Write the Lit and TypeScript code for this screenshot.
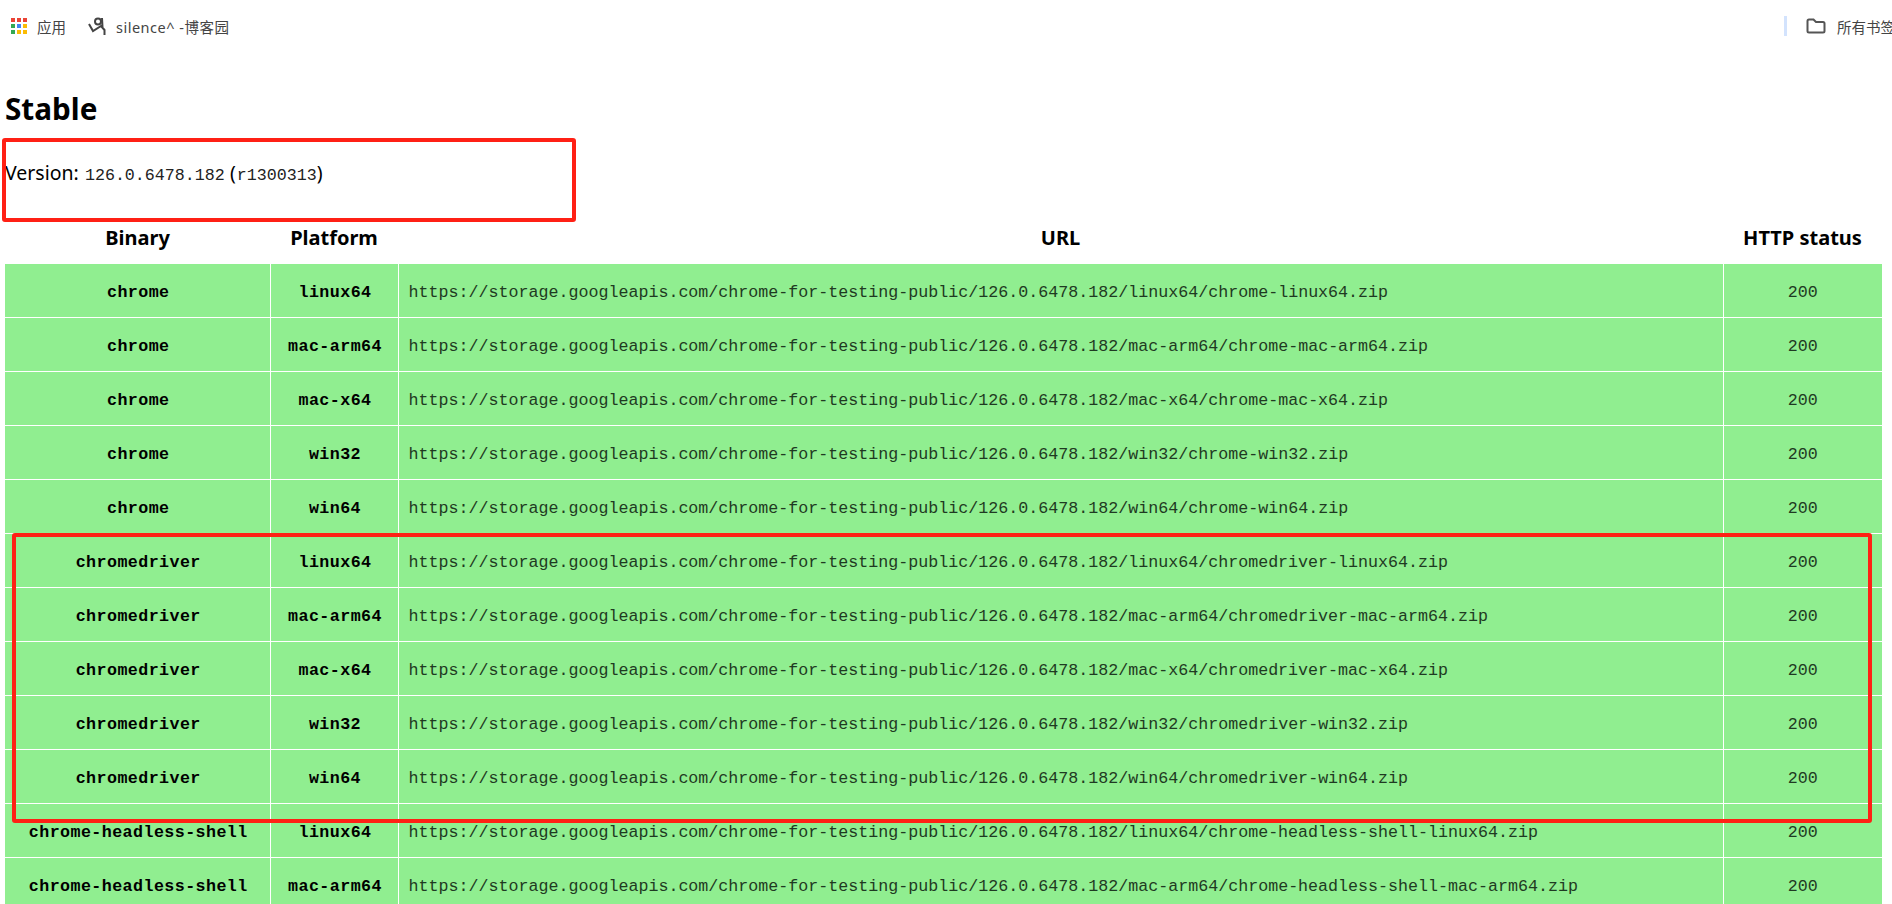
import { LitElement, html, css } from "lit";
import { customElement } from "lit/decorators.js";

const VERSION = "126.0.6478.182";
const PLATFORMS = ["linux64", "mac-arm64", "mac-x64", "win32", "win64"];
const BINARIES = ["chrome", "chromedriver", "chrome-headless-shell"];

const ROWS: [string, string][] = [];
for (const b of BINARIES) for (const p of PLATFORMS) ROWS.push([b, p]);
const APP_COLORS = ["#ea4335","#ea4335","#ea4335","#34a853","#4285f4","#fbbc04","#34a853","#fbbc04","#fbbc04"];

@customElement("app-root")
export class AppRoot extends LitElement {
  static styles = css`
    :host { display: block; position: relative; height: 904px; overflow: hidden; background: #fff; color: #000; font-family: "Noto Sans", "Noto Sans CJK SC", sans-serif; }
    .bar { display: flex; align-items: center; height: 52px; padding: 0 0 0 11px; box-sizing: border-box; font-size: 14.5px; color: #444; font-family: "Noto Sans", "Noto Sans CJK SC", sans-serif; }
    .bm { display: flex; align-items: center; gap: 10px; margin-right: 21px; }
    .apps { display: grid; grid-template-columns: repeat(3, 4px); gap: 2px; }
    .apps i { width: 4px; height: 4px; display: block; }
    .logo { margin-left: 1px; }
    .site { letter-spacing: 0.5px; }
    .spacer { flex: 1; }
    .sep { width: 3px; height: 20px; background: #d3e3fd; margin-right: 19px; }
    .all { display: flex; align-items: center; gap: 11px; width: 86px; white-space: nowrap; overflow: hidden; flex: none; }
    svg { display: block; flex: none; }
    main { padding: 38px 10px 0 5px; }
    h2 { margin: 0; font-size: 29.7px; line-height: 38px; font-weight: 700; }
    .ver { margin: 30px 0 0; font-size: 19.5px; line-height: 30px; height: 53px; }
    code { font-family: "Liberation Mono", monospace; font-size: 16.67px; color: #222; margin-left: 1px; }
    table { border-collapse: collapse; width: 1877px; table-layout: fixed; }
    thead th { font-size: 20px; font-weight: 700; height: 52px; padding: 0; text-align: center; }
    tbody tr { height: 54px; }
    tbody th, tbody td { background: #90ee90; border: 1px solid #fff; padding: 4px 10px 0; font-family: "Liberation Mono", monospace; font-size: 16.67px; white-space: nowrap; text-align: center; box-sizing: border-box; }
    tbody th { font-weight: 700; letter-spacing: 0.43px; padding: 4px 0 0 2px; }
    tbody td { color: #1f3a22; font-weight: 400; }
    tbody td.url { text-align: left; padding-left: 10px; }
    tbody tr:last-child th, tbody tr:last-child td { border-bottom: none; }
    tr > :first-child { border-left: none; }
    tr > :last-child { border-right: none; }
    .mark { position: absolute; border: 4px solid #ff2015; border-radius: 3px; box-sizing: border-box; pointer-events: none; }
    .m1 { left: 2px; top: 138px; width: 574px; height: 84px; }
    .m2 { left: 12px; top: 533px; width: 1860px; height: 290px; }
  `;

  render() {
    return html`
      <div class="bar">
        <div class="bm">
          <div class="apps">${APP_COLORS.map((c) => html`<i style="background:${c}"></i>`)}</div>
          <span>应用</span>
        </div>
        <div class="bm">
          <svg class="logo" width="18" height="20" viewBox="0 0 18 20" fill="none" stroke="#444">
            <circle cx="10" cy="5.5" r="3" stroke-width="2"/>
            <path d="M1 8 L5 15 L13 10 L16.5 14 V19 M14 2 L14.5 11" stroke-width="2"/>
          </svg>
          <span class="site">silence^ -博客园</span>
        </div>
        <div class="spacer"></div>
        <div class="sep"></div>
        <div class="all">
          <svg width="20" height="16" viewBox="0 0 20 16" fill="none" stroke="#555" stroke-width="2">
            <path d="M1.5 3 Q1.5 1.5 3 1.5 H7.5 L10 4 H17 Q18.5 4 18.5 5.5 V13 Q18.5 14.5 17 14.5 H3 Q1.5 14.5 1.5 13 Z"/>
          </svg>
          <span>所有书签</span>
        </div>
      </div>
      <main>
        <h2>Stable</h2>
        <p class="ver">Version: <code>${VERSION}</code> (<code>r1300313</code>)</p>
        <table>
          <colgroup><col style="width:265px"/><col style="width:128px"/><col style="width:1325px"/><col/></colgroup>
          <thead><tr><th>Binary</th><th>Platform</th><th>URL</th><th>HTTP status</th></tr></thead>
          <tbody>
            ${ROWS.slice(0, 12).map(([b, p]) => html`<tr>
              <th>${b}</th><th>${p}</th>
              <td class="url">https://storage.googleapis.com/chrome-for-testing-public/${VERSION}/${p}/${b}-${p}.zip</td>
              <td>200</td>
            </tr>`)}
          </tbody>
        </table>
      </main>
      <div class="mark m1"></div>
      <div class="mark m2"></div>
    `;
  }
}
